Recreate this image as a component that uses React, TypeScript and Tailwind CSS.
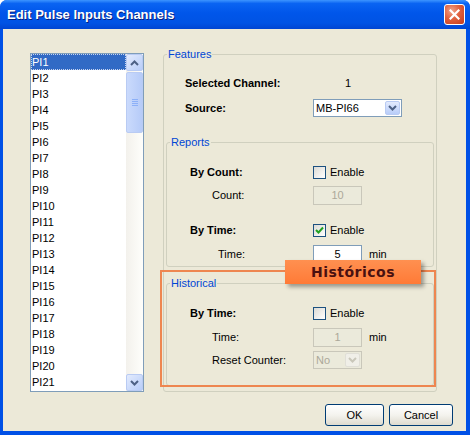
import type { ReactNode } from 'react'

const channels = Array.from({ length: 21 }, (_, i) => `PI${i + 1}`)

function Chevron({ up = false, color = '#4D6185' }: { up?: boolean; color?: string }) {
  return (
    <svg width="9" height="6" viewBox="0 0 9 6" aria-hidden="true">
      <path
        d={up ? 'M1 5 L4.5 1.5 L8 5' : 'M1 1 L4.5 4.5 L8 1'}
        fill="none"
        stroke={color}
        strokeWidth="2"
      />
    </svg>
  )
}

function GroupBox({ label, className = '', children }: { label: string; className?: string; children: ReactNode }) {
  return (
    <div className={`relative border border-[#D0D0BF] rounded-[3px] ${className}`}>
      <span className="absolute -top-[7px] left-[3px] px-px bg-[#ECE9D8] text-[#0046D5] leading-[13px]">
        {label}
      </span>
      {children}
    </div>
  )
}

function Checkbox({ checked = false }: { checked?: boolean }) {
  return (
    <span className="flex items-center gap-[4px]">
      <span className="w-[13px] h-[13px] border border-[#1C5180] bg-gradient-to-br from-[#DCDBD5] to-white flex items-center justify-center">
        {checked && (
          <svg width="9" height="9" viewBox="0 0 9 9" aria-hidden="true">
            <path d="M1 4 L3.5 6.5 L8 1.5" fill="none" stroke="#21A121" strokeWidth="2" />
          </svg>
        )}
      </span>
      Enable
    </span>
  )
}

function Field({ value, disabled = false }: { value: string; disabled?: boolean }) {
  return (
    <div
      className={`w-[49px] h-[19px] border flex items-center justify-center ${
        disabled ? 'border-[#C9C7BA] bg-[#EBEADB] text-[#ACA899]' : 'border-[#7F9DB9] bg-white'
      }`}
    >
      {value}
    </div>
  )
}

function Select({ value, className = '', disabled = false }: { value: string; className?: string; disabled?: boolean }) {
  return (
    <div
      className={`h-[18px] border flex items-center justify-between pl-[2px] pr-px ${
        disabled ? 'border-[#C9C7BA] bg-[#EBEADB] text-[#ACA899]' : 'border-[#7F9DB9] bg-white'
      } ${className}`}
    >
      <span>{value}</span>
      <span
        className={`w-[15px] h-[14px] rounded-[2px] border flex items-center justify-center ${
          disabled
            ? 'border-[#E0DFD7] bg-[#F0EFE8]'
            : 'border-[#B9CBF3] bg-gradient-to-b from-[#E3EBFD] to-[#B8CDF9]'
        }`}
      >
        <Chevron color={disabled ? '#C9C7BA' : '#4D6185'} />
      </span>
    </div>
  )
}

function Row({ label, bold = false, indent = 0, h = 'h-[16px]', className = '', children }: {
  label: string
  bold?: boolean
  indent?: number
  h?: string
  className?: string
  children: ReactNode
}) {
  return (
    <div className={`flex items-center pl-[23px] ${h} ${className}`}>
      <span className={`w-[123px] ${bold ? 'font-bold' : ''}`}>
        <span style={{ paddingLeft: indent }}>{label}</span>
      </span>
      {children}
    </div>
  )
}

function XpButton({ children, className = '' }: { children: ReactNode; className?: string }) {
  return (
    <button
      type="button"
      className={`h-[22px] rounded-[3px] border border-[#003C74] bg-gradient-to-b from-white via-[#F4F3EE] to-[#DEDBCF] flex items-center justify-center ${className}`}
    >
      {children}
    </button>
  )
}

export default function App() {
  return (
    <div className="w-[470px] h-[435px] flex flex-col rounded-t-[7px] bg-[#0050E6] font-['Liberation_Sans',Arial,sans-serif] text-[11px] text-black select-none">
      {/* Title bar */}
      <div className="h-[29px] shrink-0 rounded-t-[7px] flex items-center justify-between pl-[7px] pr-[5px] bg-[linear-gradient(to_bottom,#3D95FF_0%,#0A64F2_12%,#0056EA_45%,#0053E4_80%,#0045D2_100%)]">
        <span className="text-white font-bold text-[13px] [text-shadow:1px_1px_0_#0A1E7A]">
          Edit Pulse Inputs Channels
        </span>
        <span className="w-[21px] h-[21px] rounded-[3px] border border-white bg-[radial-gradient(circle_at_35%_30%,#F0A48C_0%,#E0603E_45%,#C43A1A_100%)] flex items-center justify-center">
          <svg width="11" height="11" viewBox="0 0 11 11" aria-hidden="true">
            <path d="M1.5 1.5 L9.5 9.5 M9.5 1.5 L1.5 9.5" stroke="white" strokeWidth="2.2" strokeLinecap="square" />
          </svg>
        </span>
      </div>

      {/* Client area */}
      <div className="relative flex-1 ml-[3px] mr-[4px] mb-[4px] bg-[#ECE9D8] flex flex-col">
        <div className="flex pt-[24px] pl-[27px]">
          {/* Channel list */}
          <div className="w-[114px] h-[339px] border border-[#7F9DB9] bg-white flex">
            <div className="flex-1 flex flex-col">
              {channels.map((c, i) => (
                <div
                  key={c}
                  className={`h-[16px] shrink-0 flex items-center pl-px ${
                    i === 0 ? 'bg-[#316AC5] text-white outline-1 outline-dotted outline-[#C8D4EE] -outline-offset-1' : ''
                  }`}
                >
                  {c}
                </div>
              ))}
            </div>
            <div className="w-[17px] bg-gradient-to-r from-[#F3F1EC] to-[#FEFEFB] flex flex-col justify-between">
              <div className="flex flex-col">
                <div className="h-[17px] rounded-[2px] border border-[#B9CBF3] bg-gradient-to-br from-[#E3EBFD] to-[#B8CDF9] flex items-center justify-center">
                  <Chevron up />
                </div>
                <div className="h-[61px] mt-px rounded-[2px] border border-[#B9CBF3] bg-gradient-to-r from-[#CADAFC] to-[#B6CBF8] flex flex-col items-center justify-center gap-px">
                  <span className="w-[6px] h-px bg-[#8CB0F8]" />
                  <span className="w-[6px] h-px bg-[#8CB0F8]" />
                  <span className="w-[6px] h-px bg-[#8CB0F8]" />
                  <span className="w-[6px] h-px bg-[#8CB0F8]" />
                </div>
              </div>
              <div className="h-[17px] rounded-[2px] border border-[#B9CBF3] bg-gradient-to-br from-[#E3EBFD] to-[#B8CDF9] flex items-center justify-center">
                <Chevron />
              </div>
            </div>
          </div>

          {/* Features */}
          <GroupBox label="Features" className="w-[274px] h-[338px] ml-[19px] mt-px">
            <div className="flex flex-col pt-[20px]">
              <div className="flex items-center h-[16px] pl-[21px]">
                <span className="w-[128px] font-bold">Selected Channel:</span>
                <span className="pl-[32px]">1</span>
              </div>
              <div className="flex items-center h-[18px] pl-[21px] mt-[8px]">
                <span className="w-[128px] font-bold">Source:</span>
                <Select value="MB-PI66" className="w-[89px]" />
              </div>

              <GroupBox label="Reports" className="mx-[2px] mt-[25px] h-[125px]">
                <div className="flex flex-col pt-[21px]">
                  <Row label="By Count:" bold>
                    <Checkbox />
                  </Row>
                  <Row label="Count:" indent={22} h="h-[19px]" className="mt-[6px]">
                    <Field value="10" disabled />
                  </Row>
                  <Row label="By Time:" bold className="mt-[17px]">
                    <Checkbox checked />
                  </Row>
                  <Row label="Time:" indent={28} h="h-[19px]" className="mt-[7px]">
                    <Field value="5" />
                    <span className="ml-[7px]">min</span>
                  </Row>
                </div>
              </GroupBox>

              <GroupBox label="Historical" className="mx-[2px] mt-[16px] h-[103px]">
                <div className="flex flex-col pt-[21px]">
                  <Row label="By Time:" bold>
                    <Checkbox />
                  </Row>
                  <Row label="Time:" indent={22} h="h-[19px]" className="mt-[7px]">
                    <Field value="1" disabled />
                    <span className="ml-[7px]">min</span>
                  </Row>
                  <Row label="Reset Counter:" indent={22} h="h-[18px]" className="mt-[4px]">
                    <Select value="No" className="w-[49px]" disabled />
                  </Row>
                </div>
              </GroupBox>
            </div>
          </GroupBox>
        </div>

        {/* Buttons */}
        <div className="flex justify-end gap-[5px] pr-[13px] mt-[12px]">
          <XpButton className="w-[59px]">OK</XpButton>
          <XpButton className="w-[64px]">Cancel</XpButton>
        </div>

        {/* Annotation overlay */}
        <div className="absolute left-[157px] top-[241px] w-[276px] h-[117px] border-2 border-[#EE8650] pointer-events-none" />
        <div className="absolute left-[282px] top-[231px] w-[136px] h-[24px] bg-gradient-to-b from-[#FF9050] to-[#FF7A36] shadow-[3px_3px_4px_rgba(0,0,0,0.35)] flex items-center justify-center pointer-events-none">
          <span className="text-[14px] font-bold tracking-[0.5px] text-[#4A1010] font-['DejaVu_Sans',sans-serif]">
            Históricos
          </span>
        </div>
      </div>
    </div>
  )
}
